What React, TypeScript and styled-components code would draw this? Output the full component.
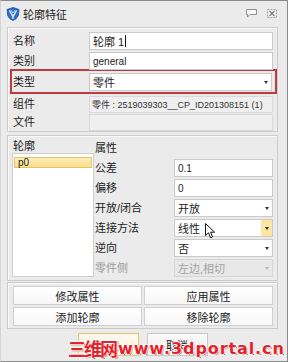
import React from "react";
import styled, { createGlobalStyle } from "styled-components";

const Global = createGlobalStyle`
  html, body { margin: 0; padding: 0; background: #ffffff; }
  * { box-sizing: border-box; }
`;

const FONT = `"Liberation Sans", "Noto Sans CJK SC", sans-serif`;

const Window = styled.div`
  position: relative;
  width: 288px;
  height: 362px;
  overflow: hidden;
  background: #ebebeb;
  border: 1px solid #8a8a8a;
  border-left-color: #d4d4d4;
  display: flex;
  flex-direction: column;
  font-family: ${FONT};
  font-size: 11px;
  color: #1c1c1c;
`;

const TitleBar = styled.div`
  height: 26px;
  flex: none;
  display: flex;
  align-items: center;
  padding: 0 10px 1px 5px;
  gap: 3px;
`;

const Title = styled.span`
  font-size: 11px;
  color: #222;
  flex: 1;
`;

const TitleIcons = styled.div`
  display: flex;
  align-items: center;
  gap: 10px;
`;

const Body = styled.div`
  display: flex;
  flex-direction: column;
  padding: 0 9px 0 6px;
`;

const Panel = styled.div<{ $mt?: number; $pad: string }>`
  margin-top: ${(p) => p.$mt ?? 0}px;
  border: 1px solid #cbcbcb;
  box-shadow: inset 1px 1px 0 #fafafa;
  padding: ${(p) => p.$pad};
  background: #ebebeb;
`;

const Row = styled.div<{ $h?: number; $mt?: number }>`
  display: grid;
  grid-template-columns: 76px 1fr;
  align-items: center;
  height: ${(p) => p.$h ?? 18}px;
  margin-top: ${(p) => p.$mt ?? 0}px;
`;

const Label = styled.span<{ $disabled?: boolean }>`
  font-size: 11px;
  line-height: 1;
  color: ${(p) => (p.$disabled ? "#9c9c9c" : "#1c1c1c")};
`;

const Highlight = styled.div`
  margin: -1px -4px 0 -3px;
  border: 2px solid #bf3a3e;
  padding: 2px 3px 1px 1px;
`;

const Field = styled.div<{ $gray?: boolean; $h?: number; $small?: boolean }>`
  position: relative;
  height: ${(p) => p.$h ?? 18}px;
  display: flex;
  align-items: center;
  padding-left: ${(p) => (p.$small ? 2 : 3)}px;
  background: ${(p) => (p.$gray ? "#efefef" : "#ffffff")};
  border: 1px solid ${(p) => (p.$gray ? "#d9d9d9" : "#cacaca")};
  font-size: ${(p) => (p.$small ? 9 : 10)}px;
  color: ${(p) => (p.$gray ? "#333" : "#1c1c1c")};
  white-space: nowrap;
  overflow: hidden;
`;

const Caret = styled.span`
  display: inline-block;
  width: 1px;
  height: 12px;
  background: #111;
  margin-left: 1px;
`;

const CjkText = styled.span`
  font-size: 11px;
`;

const Select = styled.div<{ $disabled?: boolean }>`
  position: relative;
  height: 18px;
  display: flex;
  align-items: center;
  padding-left: 3px;
  background: ${(p) => (p.$disabled ? "#e8e8e8" : "#ffffff")};
  border: 1px solid ${(p) => (p.$disabled ? "#d6d6d6" : "#cacaca")};
  color: ${(p) => (p.$disabled ? "#a2a2a2" : "#1c1c1c")};
  font-size: 11px;
`;

const SelectText = styled.span`
  flex: 1;
`;

const ArrowBox = styled.div<{ $hot?: boolean; $disabled?: boolean }>`
  width: 11px;
  align-self: stretch;
  display: flex;
  align-items: center;
  justify-content: center;
  background: ${(p) => (p.$hot ? "#fbe6a2" : "transparent")};
  color: ${(p) => (p.$disabled ? "#b8b8b8" : "#333")};
  &::after {
    content: "";
    border-left: 2px solid transparent;
    border-right: 2px solid transparent;
    border-top: 3px solid currentColor;
  }
`;

const Split = styled.div`
  display: grid;
  grid-template-columns: 82px 1fr;
`;

const ListCol = styled.div`
  display: flex;
  flex-direction: column;
`;

const ColHeader = styled.div<{ $h: number; $pl: number }>`
  height: ${(p) => p.$h}px;
  padding-left: ${(p) => p.$pl}px;
  display: flex;
  align-items: center;
  font-size: 11px;
`;

const ListBox = styled.div`
  height: 124px;
  background: #ffffff;
  border: 1px solid #cfcfcf;
  padding: 3px 1px;
`;

const ListItem = styled.div`
  height: 11px;
  padding-left: 3px;
  display: flex;
  align-items: center;
  font-size: 10px;
  background: linear-gradient(#fdeebb, #f8dc8a);
  border: 1px solid #e7c46a;
  color: #222;
`;

const PropCol = styled.div`
  display: flex;
  flex-direction: column;
  padding-left: 1px;
`;

const PropRow = styled.div`
  height: 20px;
  display: grid;
  grid-template-columns: 79px 1fr;
  align-items: center;
`;

const ButtonGrid = styled.div`
  display: grid;
  grid-template-columns: 1fr 1fr;
  gap: 2px;
`;

const Btn = styled.div`
  height: 19px;
  display: flex;
  align-items: center;
  justify-content: center;
  background: linear-gradient(#ffffff, #f7f7f7);
  border: 1px solid #d0d0d0;
  font-size: 11px;
  color: #222;
`;

const Footer = styled.div`
  margin-top: 4px;
  display: flex;
  justify-content: center;
  gap: 8px;
`;

const FootBtn = styled.div<{ $primary?: boolean }>`
  width: 61px;
  height: 23px;
  display: flex;
  align-items: center;
  justify-content: center;
  font-size: 11px;
  color: #222;
  background: ${(p) => (p.$primary ? "linear-gradient(#fffaf0, #fbf0d8)" : "linear-gradient(#fafafa, #ededed)")};
  border: 1px solid ${(p) => (p.$primary ? "#e3c37a" : "#c8c8c8")};
  box-shadow: inset 0 0 0 1px ${(p) => (p.$primary ? "#fff6df" : "#fbfbfb")};
`;

const Watermark = styled.div`
  position: absolute;
  left: 67px;
  top: 334px;
  display: flex;
  align-items: center;
  color: #e3232b;
  font-weight: bold;
  text-shadow: 1px 0 0 #fff, -1px 0 0 #fff, 0 1px 0 #fff, 0 -1px 0 #fff, 1px 1px 0 #b5151c;
  white-space: nowrap;
`;

const WmCn = styled.span`
  font-family: "Noto Sans CJK SC", sans-serif;
  font-size: 18px;
  letter-spacing: -2px;
`;

const WmEn = styled.span`
  font-family: "DejaVu Sans", sans-serif;
  font-size: 16px;
  letter-spacing: 0.9px;
  margin-left: 2px;
`;

const Cursor = styled.svg`
  position: absolute;
  left: 30px;
  top: 3px;
`;

const AppIcon = () => (
  <svg width="14" height="14" viewBox="0 0 14 14">
    <path d="M7 0.5 L13 2.5 L12.3 8.5 Q11 12 7 13.5 Q3 12 1.7 8.5 L1 2.5 Z" fill="#2f6fc7" stroke="#1d4f98" strokeWidth="0.8" />
    <path d="M3.5 3.5 L7 9.5 L10.5 3.5" fill="none" stroke="#e8f2ff" strokeWidth="1.4" />
    <path d="M5 3 L7 6 L9 3" fill="none" stroke="#9fd0ff" strokeWidth="1" />
    <circle cx="7" cy="11" r="0.9" fill="#e8f2ff" />
  </svg>
);

const BubbleIcon = () => (
  <svg width="11" height="9" viewBox="0 0 11 9">
    <path d="M0.5 0.5 H10.5 V5.5 H4 L1.5 8 V5.5 H0.5 Z" fill="#fafafa" stroke="#8d8d8d" strokeWidth="1" />
  </svg>
);

const CloseIcon = () => (
  <svg width="10" height="9" viewBox="0 0 10 9">
    <rect x="0.5" y="0.5" width="9" height="8" fill="#f2f2f2" stroke="#a3a3a3" strokeWidth="1" strokeDasharray="2 1" />
    <path d="M2.5 2 L7.5 7 M7.5 2 L2.5 7" stroke="#7a7a7a" strokeWidth="1.2" />
  </svg>
);

const PointerCursor = () => (
  <Cursor width="11" height="16" viewBox="0 0 11 16">
    <path d="M0.5 0.5 L0.5 12.5 L3.5 9.8 L5.6 14.8 L7.6 13.9 L5.6 9.2 L9.6 9.2 Z" fill="#ffffff" stroke="#111" strokeWidth="1" strokeLinejoin="round" />
  </Cursor>
);

export default function App() {
  return (
    <>
      <Global />
      <Window>
        <TitleBar>
          <AppIcon />
          <Title>轮廓特征</Title>
          <TitleIcons>
            <BubbleIcon />
            <CloseIcon />
          </TitleIcons>
        </TitleBar>
        <Body>
          <Panel $pad="4px 4px 0 5px">
            <Row>
              <Label>名称</Label>
              <Field>
                <CjkText>轮廓 1</CjkText>
                <Caret />
              </Field>
            </Row>
            <Row $mt={2}>
              <Label>类别</Label>
              <Field>general</Field>
            </Row>
            <Highlight>
              <Row>
                <Label>类型</Label>
                <Select>
                  <SelectText>零件</SelectText>
                  <ArrowBox />
                </Select>
              </Row>
            </Highlight>
            <Row $mt={2} $h={17}>
              <Label>组件</Label>
              <Field $gray $small $h={17}>零件 : 2519039303__CP_ID201308151 (1)</Field>
            </Row>
            <Row $mt={1} $h={17}>
              <Label>文件</Label>
              <Field $gray $h={17} />
            </Row>
          </Panel>

          <Panel $mt={3} $pad="0 4px 2px 4px">
            <Split>
              <ListCol>
                <ColHeader $h={17} $pl={1}>轮廓</ColHeader>
                <ListBox>
                  <ListItem>p0</ListItem>
                </ListBox>
              </ListCol>
              <PropCol>
                <ColHeader $h={22} $pl={0}>属性</ColHeader>
                <PropRow>
                  <Label>公差</Label>
                  <Field>0.1</Field>
                </PropRow>
                <PropRow>
                  <Label>偏移</Label>
                  <Field>0</Field>
                </PropRow>
                <PropRow>
                  <Label>开放/闭合</Label>
                  <Select>
                    <SelectText>开放</SelectText>
                    <ArrowBox />
                  </Select>
                </PropRow>
                <PropRow>
                  <Label>连接方法</Label>
                  <Select>
                    <SelectText>线性</SelectText>
                    <ArrowBox $hot />
                    <PointerCursor />
                  </Select>
                </PropRow>
                <PropRow>
                  <Label>逆向</Label>
                  <Select>
                    <SelectText>否</SelectText>
                    <ArrowBox />
                  </Select>
                </PropRow>
                <PropRow>
                  <Label $disabled>零件侧</Label>
                  <Select $disabled>
                    <SelectText>左边,相切</SelectText>
                    <ArrowBox $disabled />
                  </Select>
                </PropRow>
              </PropCol>
            </Split>
          </Panel>

          <Panel $mt={1} $pad="3px 4px 2px 5px">
            <ButtonGrid>
              <Btn>修改属性</Btn>
              <Btn>应用属性</Btn>
              <Btn>添加轮廓</Btn>
              <Btn>移除轮廓</Btn>
            </ButtonGrid>
          </Panel>

          <Footer>
            <FootBtn $primary>确定</FootBtn>
            <FootBtn>取消</FootBtn>
          </Footer>
        </Body>
        <Watermark>
          <WmCn>三维网</WmCn>
          <WmEn>www.3dportal.cn</WmEn>
        </Watermark>
      </Window>
    </>
  );
}
